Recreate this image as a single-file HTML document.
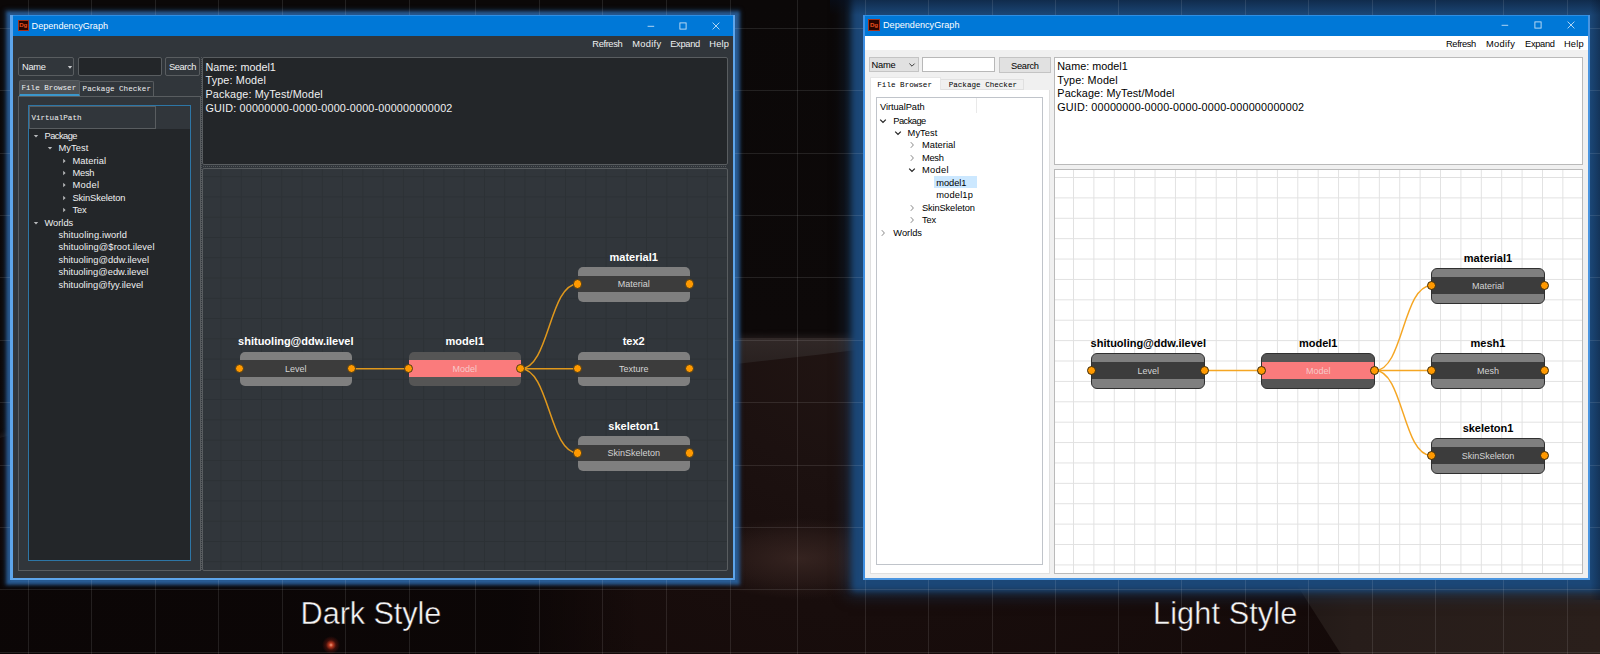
<!DOCTYPE html>
<html><head><meta charset="utf-8"><title>DependencyGraph</title>
<style>
*{box-sizing:border-box;margin:0;padding:0}
html,body{width:1600px;height:654px;overflow:hidden;background:#0b0808}
body{position:relative;font-family:"Liberation Sans",sans-serif}
body div,body svg{position:absolute}
#bg{left:0;top:0;width:1600px;height:654px;overflow:hidden;
 background:linear-gradient(to bottom,#0b0808 0px,#0d0909 330px,#0c0707 654px)}
#planet{left:-900px;top:338px;width:3400px;height:1700px;border-radius:50%;
 background:radial-gradient(ellipse 60% 100% at 52% 0%,#211513 0%,#1c1110 8%,#180d0c 16%,#140a09 30%,#0d0707 60%);box-shadow:0 -2px 6px rgba(120,100,100,0.22)}
#haze{left:1270px;top:560px;width:330px;height:94px;background:linear-gradient(to right,#1f1715 0,#271d1a 25%,#2a1f1b 100%);clip-path:polygon(11px 0,100% 0,100% 100%,71px 100%)}
#leftdark{left:0;top:560px;width:640px;height:94px;background:linear-gradient(to right,rgba(11,6,6,.95) 0,rgba(11,6,6,.95) 80%,rgba(11,6,6,0))}
#redlight{left:322px;top:636px;width:18px;height:18px;border-radius:50%;background:radial-gradient(circle,#f0a080 0,#b8381f 16%,rgba(120,25,15,.45) 40%,rgba(120,25,15,0) 70%)}
#atm{left:700px;top:338px;width:200px;height:30px;background:linear-gradient(to bottom,rgba(52,44,43,.85),rgba(44,37,36,.7));clip-path:polygon(0 0,100% 0,100% 22%,60% 55%,0 100%)}
#mtn{left:700px;top:518px;width:200px;height:90px;background:radial-gradient(ellipse 55% 45% at 50% 45%,rgba(62,42,38,.75),rgba(62,42,38,.35) 60%,rgba(62,42,38,0) 100%)}
.vl{top:0;width:1px;height:654px;background:rgba(255,255,255,.10)}
.hl{left:0;height:1px;width:1600px;background:rgba(255,255,255,.10)}
.t{white-space:pre}
.cap{color:#f4f4f4;font-size:30.7px}
.mono{font-family:"Liberation Mono",monospace;font-size:7.6px}
.d{color:#eff0f1}.l{color:#000}
.ttl{font-size:9.1px;color:#fff}
.ui{font-size:9.3px}
.tr{font-size:9.3px}
.inf{font-size:10.8px}
.nt{font-weight:bold;font-size:11px;text-align:center}
.nl{font-size:9px;text-align:center}
</style></head>
<body>
<div id="bg"><div id="planet"></div><div id="haze"></div><div id="leftdark"></div><div id="redlight"></div><div id="atm"></div><div id="mtn"></div></div>
<div style="left:10px;top:15px;width:725px;height:565px;box-shadow:0 0 3px 4.5px #285a91,0 0 4px 6px rgba(40,90,145,.3)"></div>
<div style="left:863px;top:-20px;width:770px;height:600px;background:#1b4777;box-shadow:0 0 6px 11px #1b4777,0 0 14px 15px rgba(27,71,119,.55)"></div>
<div style="left:830px;top:0px;width:770px;height:15px;background:linear-gradient(to bottom,rgba(6,16,34,.5),rgba(6,16,34,0))"></div>
<div style="left:1590px;top:0px;width:10px;height:600px;background:linear-gradient(to left,rgba(6,16,34,.35),rgba(6,16,34,0))"></div>
<div class="vl" style="left:27.8px"></div>
<div class="vl" style="left:91.3px"></div>
<div class="vl" style="left:155px"></div>
<div class="vl" style="left:218.3px"></div>
<div class="vl" style="left:282px"></div>
<div class="vl" style="left:345px"></div>
<div class="vl" style="left:408.8px"></div>
<div class="vl" style="left:475.3px"></div>
<div class="vl" style="left:539px"></div>
<div class="vl" style="left:602px"></div>
<div class="vl" style="left:666.3px"></div>
<div class="vl" style="left:729.5px"></div>
<div class="vl" style="left:797px"></div>
<div class="vl" style="left:865px"></div>
<div class="vl" style="left:927.8px"></div>
<div class="vl" style="left:991.5px"></div>
<div class="vl" style="left:1055px"></div>
<div class="vl" style="left:1118.3px"></div>
<div class="vl" style="left:1181.3px"></div>
<div class="vl" style="left:1244.5px"></div>
<div class="vl" style="left:1307.8px"></div>
<div class="vl" style="left:1371.5px"></div>
<div class="vl" style="left:1435.3px"></div>
<div class="vl" style="left:1503.3px"></div>
<div class="vl" style="left:1566.5px"></div>
<div class="hl" style="top:27.7px"></div>
<div class="hl" style="top:90.1px"></div>
<div class="hl" style="top:152.5px"></div>
<div class="hl" style="top:214.9px"></div>
<div class="hl" style="top:277.3px"></div>
<div class="hl" style="top:339.7px"></div>
<div class="hl" style="top:402.1px"></div>
<div class="hl" style="top:464.5px"></div>
<div class="hl" style="top:526.9px"></div>
<div class="hl" style="top:589.3px"></div>
<div class="hl" style="top:651.7px"></div>
<div style="left:10px;top:15px;width:725px;height:565px;background:#31363b"></div>
<div style="left:10px;top:15px;width:725px;height:21px;background:#0078d7;border-top:1px solid #2f8fe3"></div>
<div style="left:10px;top:15px;width:2.6px;height:565px;background:#5ea5ea"></div>
<div style="left:733px;top:15px;width:2px;height:565px;background:#5ea5ea"></div>
<div style="left:10px;top:578px;width:725px;height:2px;background:#5ea5ea"></div>
<div style="left:17.5px;top:19.7px;width:11.5px;height:11.5px;background:#2a0500;border:1px solid #a8321a"></div>
<div class="t " style="left:19.2px;top:18.4px;line-height:14px;font-size:6.2px;font-weight:bold;color:#e8501e;letter-spacing:-0.2px">Dg</div>
<div class="t ttl" style="left:31.6px;top:18.6px;line-height:14px;letter-spacing:0.008px;">DependencyGraph</div>
<svg style="left:645px;top:19.5px;" width="12" height="12" viewBox="0 0 12 12"><path d="M2.6 6.3H9.2" stroke="#fff" stroke-width="0.85" fill="none" opacity=".82"/></svg>
<svg style="left:677.2px;top:19.5px;" width="12" height="12" viewBox="0 0 12 12"><rect x="2.9" y="2.9" width="6.2" height="6.2" stroke="#fff" stroke-width="0.85" fill="none" opacity=".82"/></svg>
<svg style="left:710.4px;top:19.5px;" width="12" height="12" viewBox="0 0 12 12"><path d="M2.6 2.6L9.4 9.4M9.4 2.6L2.6 9.4" stroke="#fff" stroke-width="0.85" fill="none" opacity=".82"/></svg>
<div class="t ui d" style="left:592.3px;top:36.6px;line-height:14px;letter-spacing:-0.377px;">Refresh</div>
<div class="t ui d" style="left:632.2px;top:36.6px;line-height:14px;letter-spacing:0.302px;">Modify</div>
<div class="t ui d" style="left:670.2px;top:36.6px;line-height:14px;letter-spacing:-0.309px;">Expand</div>
<div class="t ui d" style="left:709.3px;top:36.6px;line-height:14px;letter-spacing:0.158px;">Help</div>
<div style="left:18.4px;top:57.4px;width:55.8px;height:19.1px;border:1px solid #595d60;border-radius:2px"></div>
<div class="t ui d" style="left:22px;top:60px;line-height:14px;letter-spacing:-0.269px;">Name</div>
<svg style="left:66.5px;top:64.5px;" width="6" height="5" viewBox="0 0 6 5"><path d="M0.8 1L5.2 1L3 3.8Z" fill="#c8cacc"/></svg>
<div style="left:78.3px;top:57.4px;width:83.4px;height:19.1px;background:#232629;border:1px solid #595d60;border-radius:2px"></div>
<div style="left:165.2px;top:57.4px;width:34.7px;height:18.7px;border:1px solid #595d60;border-radius:2px"></div>
<div class="t ui d" style="left:169px;top:60px;line-height:14px;letter-spacing:-0.394px;">Search</div>
<div style="left:18.7px;top:80.3px;width:61px;height:15.4px;background:#4d5155;border:1px solid #595d60;border-bottom:2px solid #3b97cc;border-radius:2px 2px 0 0"></div>
<div class="t mono d" style="left:21.5px;top:81.2px;line-height:14px;">File Browser</div>
<div style="left:79.6px;top:80.8px;width:74.2px;height:15px;border:1px solid #595d60;border-left:none;border-bottom:none;border-radius:0 2px 0 0"></div>
<div class="t mono d" style="left:82.6px;top:81.7px;line-height:14px;">Package Checker</div>
<div style="left:18.2px;top:96px;width:182.4px;height:475px;border:1px solid #595d60"></div>
<div style="left:27.8px;top:105.4px;width:162.8px;height:455.6px;background:#232629;border:1px solid #2d76a6"></div>
<div style="left:28.8px;top:106.4px;width:160.8px;height:22.3px;background:#31363b"></div>
<div style="left:28.8px;top:106.4px;width:127.4px;height:22.3px;border:1px solid #595d60"></div>
<div class="t mono d" style="left:31.4px;top:111.1px;line-height:14px;">VirtualPath</div>
<div class="t tr d" style="left:44.5px;top:128.8px;line-height:14px;letter-spacing:-0.532px;">Package</div>
<svg style="left:32.9px;top:132.8px;" width="6" height="6" viewBox="0 0 6 6"><path d="M0.8 2L5.2 2L3 4.6Z" fill="#b8babc"/></svg>
<div class="t tr d" style="left:58.5px;top:141.21px;line-height:14px;letter-spacing:0.069px;">MyTest</div>
<svg style="left:46.9px;top:145.21px;" width="6" height="6" viewBox="0 0 6 6"><path d="M0.8 2L5.2 2L3 4.6Z" fill="#b8babc"/></svg>
<div class="t tr d" style="left:72.5px;top:153.62px;line-height:14px;letter-spacing:0.060px;">Material</div>
<svg style="left:60.9px;top:157.62px;" width="6" height="6" viewBox="0 0 6 6"><path d="M2.2 0.8L2.2 5.2L4.6 3Z" fill="#b8babc"/></svg>
<div class="t tr d" style="left:72.5px;top:166.03px;line-height:14px;letter-spacing:-0.247px;">Mesh</div>
<svg style="left:60.9px;top:170.03px;" width="6" height="6" viewBox="0 0 6 6"><path d="M2.2 0.8L2.2 5.2L4.6 3Z" fill="#b8babc"/></svg>
<div class="t tr d" style="left:72.5px;top:178.44px;line-height:14px;letter-spacing:0.317px;">Model</div>
<svg style="left:60.9px;top:182.44px;" width="6" height="6" viewBox="0 0 6 6"><path d="M2.2 0.8L2.2 5.2L4.6 3Z" fill="#b8babc"/></svg>
<div class="t tr d" style="left:72.5px;top:190.85px;line-height:14px;letter-spacing:-0.117px;">SkinSkeleton</div>
<svg style="left:60.9px;top:194.85px;" width="6" height="6" viewBox="0 0 6 6"><path d="M2.2 0.8L2.2 5.2L4.6 3Z" fill="#b8babc"/></svg>
<div class="t tr d" style="left:72.5px;top:203.26px;line-height:14px;letter-spacing:-0.136px;">Tex</div>
<svg style="left:60.9px;top:207.26px;" width="6" height="6" viewBox="0 0 6 6"><path d="M2.2 0.8L2.2 5.2L4.6 3Z" fill="#b8babc"/></svg>
<div class="t tr d" style="left:44.5px;top:215.67px;line-height:14px;letter-spacing:-0.014px;">Worlds</div>
<svg style="left:32.9px;top:219.67px;" width="6" height="6" viewBox="0 0 6 6"><path d="M0.8 2L5.2 2L3 4.6Z" fill="#b8babc"/></svg>
<div class="t tr d" style="left:58.5px;top:228.08px;line-height:14px;letter-spacing:0.146px;">shituoling.iworld</div>
<div class="t tr d" style="left:58.5px;top:240.49px;line-height:14px;letter-spacing:0.104px;">shituoling@$root.ilevel</div>
<div class="t tr d" style="left:58.5px;top:252.9px;line-height:14px;letter-spacing:0.072px;">shituoling@ddw.ilevel</div>
<div class="t tr d" style="left:58.5px;top:265.31px;line-height:14px;letter-spacing:0.042px;">shituoling@edw.ilevel</div>
<div class="t tr d" style="left:58.5px;top:277.72px;line-height:14px;letter-spacing:0.050px;">shituoling@fyy.ilevel</div>
<div style="left:202.3px;top:57.4px;width:525.4px;height:108px;background:#232629;border:1px solid #595d60;border-radius:2px"></div>
<div class="t inf d" style="left:205.5px;top:59.9px;line-height:14px;letter-spacing:0.015px;">Name: model1</div>
<div class="t inf d" style="left:205.5px;top:73.45px;line-height:14px;letter-spacing:0.147px;">Type: Model</div>
<div class="t inf d" style="left:205.5px;top:87px;line-height:14px;letter-spacing:0.127px;">Package: MyTest/Model</div>
<div class="t inf d" style="left:205.5px;top:100.55px;line-height:14px;letter-spacing:0.178px;">GUID: 00000000-0000-0000-0000-000000000002</div>
<div style="left:201.2px;top:57px;width:1px;height:514px;background:repeating-linear-gradient(to bottom,#5c6063 0 1px,transparent 1px 2px);opacity:.8"></div>
<div style="left:203px;top:166.2px;width:524px;height:1px;background:repeating-linear-gradient(to right,#5c6063 0 1px,transparent 1px 2px);opacity:.8"></div>
<div style="left:202.3px;top:168px;width:525.4px;height:403px;background-color:#31363b;border:1px solid #595d60;border-radius:2px;background-image:linear-gradient(to right,#2c3135 0,#2c3135 1px,transparent 1px),linear-gradient(to bottom,#2c3135 0,#2c3135 1px,transparent 1px);background-size:20.27px 20.27px;background-position:17.5px 7.2px"></div>
<div style="left:239.8px;top:351.8px;width:112px;height:34.5px;background:#7f7f7f;border-radius:5px;overflow:hidden"><div style="left:0;right:0;top:8.7px;height:16.4px;background:#3c3c3c"></div></div>
<div class="t nl" style="left:239.8px;width:112px;top:362.7px;line-height:12px;color:#d4d4d4">Level</div>
<div class="t nt" style="left:209.8px;width:172px;top:334.4px;line-height:14px;color:#fff">shituoling@ddw.ilevel</div>
<div style="left:408.8px;top:351.8px;width:112px;height:34.5px;background:#555555;border-radius:5px;overflow:hidden"><div style="left:0;right:0;top:8.7px;height:16.4px;background:#fa7b7c"></div></div>
<div class="t nl" style="left:408.8px;width:112px;top:362.7px;line-height:12px;color:#f6c9c9">Model</div>
<div class="t nt" style="left:378.8px;width:172px;top:334.4px;line-height:14px;color:#fff">model1</div>
<div style="left:577.7px;top:267.1px;width:112px;height:34.5px;background:#7f7f7f;border-radius:5px;overflow:hidden"><div style="left:0;right:0;top:8.7px;height:16.4px;background:#3c3c3c"></div></div>
<div class="t nl" style="left:577.7px;width:112px;top:278px;line-height:12px;color:#d4d4d4">Material</div>
<div class="t nt" style="left:547.7px;width:172px;top:249.7px;line-height:14px;color:#fff">material1</div>
<div style="left:577.7px;top:351.8px;width:112px;height:34.5px;background:#7f7f7f;border-radius:5px;overflow:hidden"><div style="left:0;right:0;top:8.7px;height:16.4px;background:#3c3c3c"></div></div>
<div class="t nl" style="left:577.7px;width:112px;top:362.7px;line-height:12px;color:#d4d4d4">Texture</div>
<div class="t nt" style="left:547.7px;width:172px;top:334.4px;line-height:14px;color:#fff">tex2</div>
<div style="left:577.7px;top:436.1px;width:112px;height:34.5px;background:#7f7f7f;border-radius:5px;overflow:hidden"><div style="left:0;right:0;top:8.7px;height:16.4px;background:#3c3c3c"></div></div>
<div class="t nl" style="left:577.7px;width:112px;top:447px;line-height:12px;color:#d4d4d4">SkinSkeleton</div>
<div class="t nt" style="left:547.7px;width:172px;top:418.7px;line-height:14px;color:#fff">skeleton1</div>
<svg style="left:200px;top:168px;" width="530" height="403" viewBox="0 0 530 403"><g transform="translate(-200,-168)"><path d="M351.8 368.7C380.3 368.7 380.3 368.7 408.8 368.7" stroke="#e0981c" stroke-width="1.5" fill="none"/><path d="M520.8 368.7C549.25 368.7 549.25 284 577.7 284" stroke="#e0981c" stroke-width="1.5" fill="none"/><path d="M520.8 368.7C549.25 368.7 549.25 368.7 577.7 368.7" stroke="#e0981c" stroke-width="1.5" fill="none"/><path d="M520.8 368.7C549.25 368.7 549.25 453 577.7 453" stroke="#e0981c" stroke-width="1.5" fill="none"/></g></svg>
<div style="left:234.9px;top:364.1px;width:9.2px;height:9.2px;border-radius:50%;background:#ff9900;border:1px solid #4a3a18"></div>
<div style="left:346.9px;top:364.1px;width:9.2px;height:9.2px;border-radius:50%;background:#ff9900;border:1px solid #4a3a18"></div>
<div style="left:403.9px;top:364.1px;width:9.2px;height:9.2px;border-radius:50%;background:#ff9900;border:1px solid #4a3a18"></div>
<div style="left:515.9px;top:364.1px;width:9.2px;height:9.2px;border-radius:50%;background:#ff9900;border:1px solid #4a3a18"></div>
<div style="left:572.8px;top:279.4px;width:9.2px;height:9.2px;border-radius:50%;background:#ff9900;border:1px solid #4a3a18"></div>
<div style="left:684.8px;top:279.4px;width:9.2px;height:9.2px;border-radius:50%;background:#ff9900;border:1px solid #4a3a18"></div>
<div style="left:572.8px;top:364.1px;width:9.2px;height:9.2px;border-radius:50%;background:#ff9900;border:1px solid #4a3a18"></div>
<div style="left:684.8px;top:364.1px;width:9.2px;height:9.2px;border-radius:50%;background:#ff9900;border:1px solid #4a3a18"></div>
<div style="left:572.8px;top:448.4px;width:9.2px;height:9.2px;border-radius:50%;background:#ff9900;border:1px solid #4a3a18"></div>
<div style="left:684.8px;top:448.4px;width:9.2px;height:9.2px;border-radius:50%;background:#ff9900;border:1px solid #4a3a18"></div>
<div style="left:863px;top:15px;width:727px;height:565px;background:#f0f0f0"></div>
<div style="left:863px;top:15px;width:727px;height:21px;background:#0078d7;border-top:1px solid #2f8fe3"></div>
<div style="left:863px;top:36px;width:727px;height:14px;background:#fff"></div>
<div style="left:863px;top:15px;width:2px;height:565px;background:#3f8fe2"></div>
<div style="left:1588.4px;top:15px;width:1.8px;height:565px;background:#4a95e0"></div>
<div style="left:863px;top:578.2px;width:727px;height:2px;background:#4a95e0"></div>
<div style="left:868.2px;top:19.3px;width:11.5px;height:11.5px;background:#2a0500;border:1px solid #a8321a"></div>
<div class="t " style="left:869.9px;top:18px;line-height:14px;font-size:6.2px;font-weight:bold;color:#e8501e;letter-spacing:-0.2px">Dg</div>
<div class="t ttl" style="left:883px;top:18.2px;line-height:14px;letter-spacing:0.008px;">DependencyGraph</div>
<svg style="left:1499px;top:19px;" width="12" height="12" viewBox="0 0 12 12"><path d="M2.6 6.3H9.2" stroke="#fff" stroke-width="0.85" fill="none" opacity=".82"/></svg>
<svg style="left:1532px;top:19px;" width="12" height="12" viewBox="0 0 12 12"><rect x="2.9" y="2.9" width="6.2" height="6.2" stroke="#fff" stroke-width="0.85" fill="none" opacity=".82"/></svg>
<svg style="left:1565px;top:19px;" width="12" height="12" viewBox="0 0 12 12"><path d="M2.6 2.6L9.4 9.4M9.4 2.6L2.6 9.4" stroke="#fff" stroke-width="0.85" fill="none" opacity=".82"/></svg>
<div class="t ui l" style="left:1446px;top:36.8px;line-height:14px;letter-spacing:-0.377px;">Refresh</div>
<div class="t ui l" style="left:1486px;top:36.8px;line-height:14px;letter-spacing:0.302px;">Modify</div>
<div class="t ui l" style="left:1525px;top:36.8px;line-height:14px;letter-spacing:-0.309px;">Expand</div>
<div class="t ui l" style="left:1564px;top:36.8px;line-height:14px;letter-spacing:0.158px;">Help</div>
<div style="left:869.3px;top:57.4px;width:49.4px;height:14.3px;background:#e1e1e1;border:1px solid #c4c4c4"></div>
<div class="t ui l" style="left:871.5px;top:57.8px;line-height:14px;letter-spacing:-0.203px;">Name</div>
<svg style="left:908.2px;top:62px;" width="8" height="6" viewBox="0 0 8 6"><path d="M1.4 1.6L4 4.2L6.6 1.6" stroke="#3a3a3a" stroke-width="1" fill="none"/></svg>
<div style="left:922.4px;top:57.4px;width:72.4px;height:14.5px;background:#fff;border:1px solid #b8b8b8"></div>
<div style="left:999.2px;top:57.4px;width:51.7px;height:15.2px;background:#e1e1e1;border:1px solid #c4c4c4"></div>
<div class="t ui l" style="left:1011px;top:58.7px;line-height:14px;letter-spacing:-0.294px;">Search</div>
<div style="left:941px;top:79.2px;width:83px;height:11px;background:#f0f0f0;border:1px solid #e0e0e0;border-left:none"></div>
<div class="t mono l" style="left:948.7px;top:77.5px;line-height:14px;">Package Checker</div>
<div style="left:869.6px;top:77.3px;width:71.6px;height:13.5px;background:#fff;border:1px solid #e6e6e6;border-bottom:none"></div>
<div class="t mono l" style="left:877.3px;top:77.6px;line-height:14px;">File Browser</div>
<div style="left:869.6px;top:90px;width:180px;height:483.5px;background:#fff;border:1px solid #e0e0e0;border-top:none"></div>
<div style="left:876.3px;top:96.5px;width:167px;height:468.8px;background:#fff;border:1px solid #c0c4ca"></div>
<div style="left:976px;top:97.5px;width:1px;height:15.5px;background:#e9e9e9"></div>
<div class="t tr l" style="left:880px;top:99.5px;line-height:14px;letter-spacing:-0.073px;">VirtualPath</div>
<div class="t tr l" style="left:893.3px;top:113.5px;line-height:14px;letter-spacing:-0.532px;">Package</div>
<svg style="left:879.4px;top:116.5px;" width="8" height="8" viewBox="0 0 8 8"><path d="M1.2 2.6L4 5.4L6.8 2.6" stroke="#222" stroke-width="1.25" fill="none"/></svg>
<div class="t tr l" style="left:907.6px;top:125.95px;line-height:14px;letter-spacing:0.069px;">MyTest</div>
<svg style="left:893.7px;top:128.95px;" width="8" height="8" viewBox="0 0 8 8"><path d="M1.2 2.6L4 5.4L6.8 2.6" stroke="#222" stroke-width="1.25" fill="none"/></svg>
<div class="t tr l" style="left:921.9px;top:138.4px;line-height:14px;letter-spacing:0.060px;">Material</div>
<svg style="left:908px;top:141.4px;" width="8" height="8" viewBox="0 0 8 8"><path d="M2.8 1.2L5.4 4L2.8 6.8" stroke="#7a7a7a" stroke-width="0.9" fill="none"/></svg>
<div class="t tr l" style="left:921.9px;top:150.85px;line-height:14px;letter-spacing:-0.247px;">Mesh</div>
<svg style="left:908px;top:153.85px;" width="8" height="8" viewBox="0 0 8 8"><path d="M2.8 1.2L5.4 4L2.8 6.8" stroke="#7a7a7a" stroke-width="0.9" fill="none"/></svg>
<div class="t tr l" style="left:921.9px;top:163.3px;line-height:14px;letter-spacing:0.317px;">Model</div>
<svg style="left:908px;top:166.3px;" width="8" height="8" viewBox="0 0 8 8"><path d="M1.2 2.6L4 5.4L6.8 2.6" stroke="#222" stroke-width="1.25" fill="none"/></svg>
<div style="left:934.4px;top:176.05px;width:42.3px;height:12.2px;background:#cce8ff"></div>
<div class="t tr l" style="left:936.2px;top:175.75px;line-height:14px;letter-spacing:-0.041px;">model1</div>
<div class="t tr l" style="left:936.2px;top:188.2px;line-height:14px;letter-spacing:0.171px;">model1p</div>
<div class="t tr l" style="left:921.9px;top:200.65px;line-height:14px;letter-spacing:-0.117px;">SkinSkeleton</div>
<svg style="left:908px;top:203.65px;" width="8" height="8" viewBox="0 0 8 8"><path d="M2.8 1.2L5.4 4L2.8 6.8" stroke="#7a7a7a" stroke-width="0.9" fill="none"/></svg>
<div class="t tr l" style="left:921.9px;top:213.1px;line-height:14px;letter-spacing:-0.136px;">Tex</div>
<svg style="left:908px;top:216.1px;" width="8" height="8" viewBox="0 0 8 8"><path d="M2.8 1.2L5.4 4L2.8 6.8" stroke="#7a7a7a" stroke-width="0.9" fill="none"/></svg>
<div class="t tr l" style="left:893.3px;top:225.55px;line-height:14px;letter-spacing:-0.014px;">Worlds</div>
<svg style="left:879.4px;top:228.55px;" width="8" height="8" viewBox="0 0 8 8"><path d="M2.8 1.2L5.4 4L2.8 6.8" stroke="#7a7a7a" stroke-width="0.9" fill="none"/></svg>
<div style="left:1054.4px;top:57.2px;width:528.6px;height:108.2px;background:#fff;border:1px solid #bababa"></div>
<div class="t inf l" style="left:1057.3px;top:59px;line-height:14px;letter-spacing:0.015px;">Name: model1</div>
<div class="t inf l" style="left:1057.3px;top:72.62px;line-height:14px;letter-spacing:0.147px;">Type: Model</div>
<div class="t inf l" style="left:1057.3px;top:86.24px;line-height:14px;letter-spacing:0.127px;">Package: MyTest/Model</div>
<div class="t inf l" style="left:1057.3px;top:99.86px;line-height:14px;letter-spacing:0.178px;">GUID: 00000000-0000-0000-0000-000000000002</div>
<div style="left:1054.4px;top:169px;width:528.6px;height:405px;background-color:#fff;border:1px solid #bababa;background-image:linear-gradient(to right,#e1e1e1 0,#e1e1e1 1px,transparent 1px),linear-gradient(to bottom,#e1e1e1 0,#e1e1e1 1px,transparent 1px);background-size:20.4px 20.4px;background-position:18px 7px"></div>
<div style="left:1091.3px;top:353px;width:114px;height:36px;background:#7f7f7f;border-radius:6px;border:1px solid #303030;overflow:hidden"><div style="left:0;right:0;top:8px;height:17px;background:#3c3c3c"></div></div>
<div class="t nl" style="left:1091.3px;width:114px;top:364.5px;line-height:12px;color:#d4d4d4">Level</div>
<div class="t nt" style="left:1061.3px;width:174px;top:335.7px;line-height:14px;color:#000">shituoling@ddw.ilevel</div>
<div style="left:1261.2px;top:353px;width:114px;height:36px;background:#555555;border-radius:6px;border:1px solid #303030;overflow:hidden"><div style="left:0;right:0;top:8px;height:17px;background:#fa7b7c"></div></div>
<div class="t nl" style="left:1261.2px;width:114px;top:364.5px;line-height:12px;color:#f6c9c9">Model</div>
<div class="t nt" style="left:1231.2px;width:174px;top:335.7px;line-height:14px;color:#000">model1</div>
<div style="left:1431px;top:268.2px;width:114px;height:36px;background:#7f7f7f;border-radius:6px;border:1px solid #303030;overflow:hidden"><div style="left:0;right:0;top:8px;height:17px;background:#3c3c3c"></div></div>
<div class="t nl" style="left:1431px;width:114px;top:279.7px;line-height:12px;color:#d4d4d4">Material</div>
<div class="t nt" style="left:1401px;width:174px;top:250.9px;line-height:14px;color:#000">material1</div>
<div style="left:1431px;top:353px;width:114px;height:36px;background:#7f7f7f;border-radius:6px;border:1px solid #303030;overflow:hidden"><div style="left:0;right:0;top:8px;height:17px;background:#3c3c3c"></div></div>
<div class="t nl" style="left:1431px;width:114px;top:364.5px;line-height:12px;color:#d4d4d4">Mesh</div>
<div class="t nt" style="left:1401px;width:174px;top:335.7px;line-height:14px;color:#000">mesh1</div>
<div style="left:1431px;top:438px;width:114px;height:36px;background:#7f7f7f;border-radius:6px;border:1px solid #303030;overflow:hidden"><div style="left:0;right:0;top:8px;height:17px;background:#3c3c3c"></div></div>
<div class="t nl" style="left:1431px;width:114px;top:449.5px;line-height:12px;color:#d4d4d4">SkinSkeleton</div>
<div class="t nt" style="left:1401px;width:174px;top:420.7px;line-height:14px;color:#000">skeleton1</div>
<svg style="left:1054px;top:169px;" width="530" height="405" viewBox="0 0 530 405"><g transform="translate(-1054,-169)"><path d="M1205.3 370.5C1233.25 370.5 1233.25 370.5 1261.2 370.5" stroke="#f5a623" stroke-width="1.45" fill="none"/><path d="M1375.2 370.5C1403.1 370.5 1403.1 285.7 1431 285.7" stroke="#f5a623" stroke-width="1.45" fill="none"/><path d="M1375.2 370.5C1403.1 370.5 1403.1 370.5 1431 370.5" stroke="#f5a623" stroke-width="1.45" fill="none"/><path d="M1375.2 370.5C1403.1 370.5 1403.1 455.5 1431 455.5" stroke="#f5a623" stroke-width="1.45" fill="none"/></g></svg>
<div style="left:1087px;top:365.9px;width:9.2px;height:9.2px;border-radius:50%;background:#ff9900;border:1px solid #3a2c10"></div>
<div style="left:1200.2px;top:365.9px;width:9.2px;height:9.2px;border-radius:50%;background:#ff9900;border:1px solid #3a2c10"></div>
<div style="left:1256.9px;top:365.9px;width:9.2px;height:9.2px;border-radius:50%;background:#ff9900;border:1px solid #3a2c10"></div>
<div style="left:1370.1px;top:365.9px;width:9.2px;height:9.2px;border-radius:50%;background:#ff9900;border:1px solid #3a2c10"></div>
<div style="left:1426.7px;top:281.1px;width:9.2px;height:9.2px;border-radius:50%;background:#ff9900;border:1px solid #3a2c10"></div>
<div style="left:1539.9px;top:281.1px;width:9.2px;height:9.2px;border-radius:50%;background:#ff9900;border:1px solid #3a2c10"></div>
<div style="left:1426.7px;top:365.9px;width:9.2px;height:9.2px;border-radius:50%;background:#ff9900;border:1px solid #3a2c10"></div>
<div style="left:1539.9px;top:365.9px;width:9.2px;height:9.2px;border-radius:50%;background:#ff9900;border:1px solid #3a2c10"></div>
<div style="left:1426.7px;top:450.9px;width:9.2px;height:9.2px;border-radius:50%;background:#ff9900;border:1px solid #3a2c10"></div>
<div style="left:1539.9px;top:450.9px;width:9.2px;height:9.2px;border-radius:50%;background:#ff9900;border:1px solid #3a2c10"></div>
<div class="t cap" style="left:300.6px;top:595.6px;line-height:36px;letter-spacing:-0.089px;-webkit-text-stroke:0.45px #0f0808">Dark Style</div>
<div class="t cap" style="left:1153px;top:595.6px;line-height:36px;letter-spacing:0.095px;-webkit-text-stroke:0.45px #170d0c">Light Style</div>
</body></html>
